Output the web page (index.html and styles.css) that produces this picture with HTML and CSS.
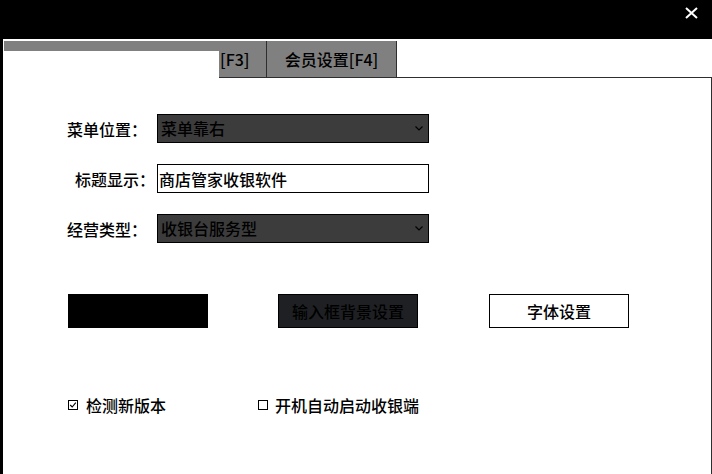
FILE: index.html
```html
<!DOCTYPE html>
<html lang="zh-CN">
<head>
<meta charset="utf-8">
<title>系统设置</title>
<link rel="stylesheet" href="styles.css">
</head>
<body>
<div class="titlebar">
  <svg class="close" viewBox="0 0 13 12" width="13" height="12"><path d="M1 1L12 11M12 1L1 11" stroke="#fff" stroke-width="2" fill="none"/></svg>
</div>
<div class="window">
  <div class="tabs">
    <div class="tab-active"><div class="tab-active-top"></div></div>
    <div class="tab tab-f3">[F3]</div>
    <div class="tab tab-f4">会员设置[F4]</div>
    <div class="tab-fill"></div>
  </div>
  <div class="panel">
    <div class="row">
      <label class="lbl">菜单位置：</label>
      <div class="sel">
        <div class="sel-box">菜单靠右</div>
        <svg class="chev" viewBox="0 0 8 5" width="8" height="5"><path d="M0.5 0.5L4 4L7.5 0.5" stroke="#000" stroke-width="1.2" fill="none"/></svg>
      </div>
    </div>
    <div class="row">
      <label class="lbl lbl-indent">标题显示：</label>
      <input class="txt" type="text" value="商店管家收银软件">
    </div>
    <div class="row">
      <label class="lbl">经营类型：</label>
      <div class="sel">
        <div class="sel-box">收银台服务型</div>
        <svg class="chev" viewBox="0 0 8 5" width="8" height="5"><path d="M0.5 0.5L4 4L7.5 0.5" stroke="#000" stroke-width="1.2" fill="none"/></svg>
      </div>
    </div>
    <div class="buttons">
      <button class="btn btn-black"></button>
      <button class="btn btn-dark">输入框背景设置</button>
      <button class="btn btn-white">字体设置</button>
    </div>
    <div class="checks">
      <div class="check check-first">
        <svg viewBox="0 0 10 10" width="10" height="10"><rect x="0.5" y="0.5" width="9" height="9" stroke="#000" fill="none"/><path d="M2.2 5L4.2 7L7.8 2.6" stroke="#000" stroke-width="1.1" fill="none"/></svg>
        <span>检测新版本</span>
      </div>
      <div class="check check-second">
        <svg viewBox="0 0 10 10" width="10" height="10"><rect x="0.5" y="0.5" width="9" height="9" stroke="#000" fill="none"/></svg>
        <span>开机自动启动收银端</span>
      </div>
    </div>
  </div>
</div>
</body>
</html>
```
FILE: styles.css
```css
html, body {
  margin: 0;
  padding: 0;
}
body {
  width: 712px;
  height: 474px;
  overflow: hidden;
  background: #fff;
  font-family: "Noto Sans CJK SC", "Noto Sans", sans-serif;
  font-size: 16px;
  font-weight: 500;
  color: #000;
}
.titlebar {
  height: 39px;
  background: #000;
  display: flex;
  justify-content: flex-end;
  align-items: flex-start;
}
.close {
  display: block;
  margin: 7px 14px 0 0;
}
.window {
  height: 435px;
  box-sizing: border-box;
  border-left: 3px solid #000;
  padding-top: 2px;
  display: flex;
  flex-direction: column;
}
.tabs {
  display: flex;
  height: 37px;
}
.tab-active {
  width: 216px;
  background: #fff;
}
.tab-active-top {
  margin-left: 1px;
  height: 10px;
  background: #808080;
}
.tab {
  box-sizing: border-box;
  background: #808080;
  border-right: 1px solid #2e2e2e;
  border-bottom: 1px solid #2e2e2e;
  line-height: 36px;
  color: #000;
  white-space: nowrap;
  overflow: hidden;
}
.tab-f3 {
  width: 48px;
  padding-left: 1px;
}
.tab-f4 {
  width: 130px;
  text-align: center;
}
.tab-fill {
  flex: 1;
  border-bottom: 1px solid #2e2e2e;
}
.panel {
  flex: 1;
  border-right: 1px solid #2e2e2e;
  padding: 36px 0 0 64px;
}
.row {
  display: flex;
  align-items: center;
  height: 29px;
  margin-bottom: 21px;
}
.row:nth-child(3) {
  margin-bottom: 0;
}
.lbl {
  width: 90px;
  box-sizing: border-box;
  white-space: nowrap;
}
.lbl-indent {
  padding-left: 8px;
}
.sel {
  position: relative;
  width: 272px;
  height: 29px;
}
.sel-box {
  height: 100%;
  box-sizing: border-box;
  border: 1px solid #000;
  background: #3c3c3c;
  color: #000;
  padding-left: 3px;
  line-height: 27px;
}
.chev {
  position: absolute;
  right: 6px;
  top: 12px;
}
.txt {
  width: 272px;
  height: 29px;
  box-sizing: border-box;
  margin: 0;
  border: 1px solid #000;
  border-radius: 0;
  padding: 0 0 0 1px;
  font: inherit;
  color: #000;
  background: #fff;
  outline: none;
}
.buttons {
  display: flex;
  gap: 70px;
  margin: 51px 0 0 1px;
}
.btn {
  width: 140px;
  height: 34px;
  box-sizing: border-box;
  margin: 0;
  padding: 0;
  border: 1px solid #000;
  border-radius: 0;
  font: inherit;
}
.btn-black {
  background: #000;
}
.btn-dark {
  background: #1f2023;
  color: #000;
}
.btn-white {
  background: #fff;
  color: #000;
  margin-left: 1px;
}
.checks {
  display: flex;
  margin: 67px 0 0 1px;
  line-height: 20px;
}
.check {
  display: flex;
  align-items: center;
  gap: 8px;
}
.check svg {
  display: block;
}
.check-first {
  width: 190px;
}
.check-second {
  gap: 7px;
}
```
